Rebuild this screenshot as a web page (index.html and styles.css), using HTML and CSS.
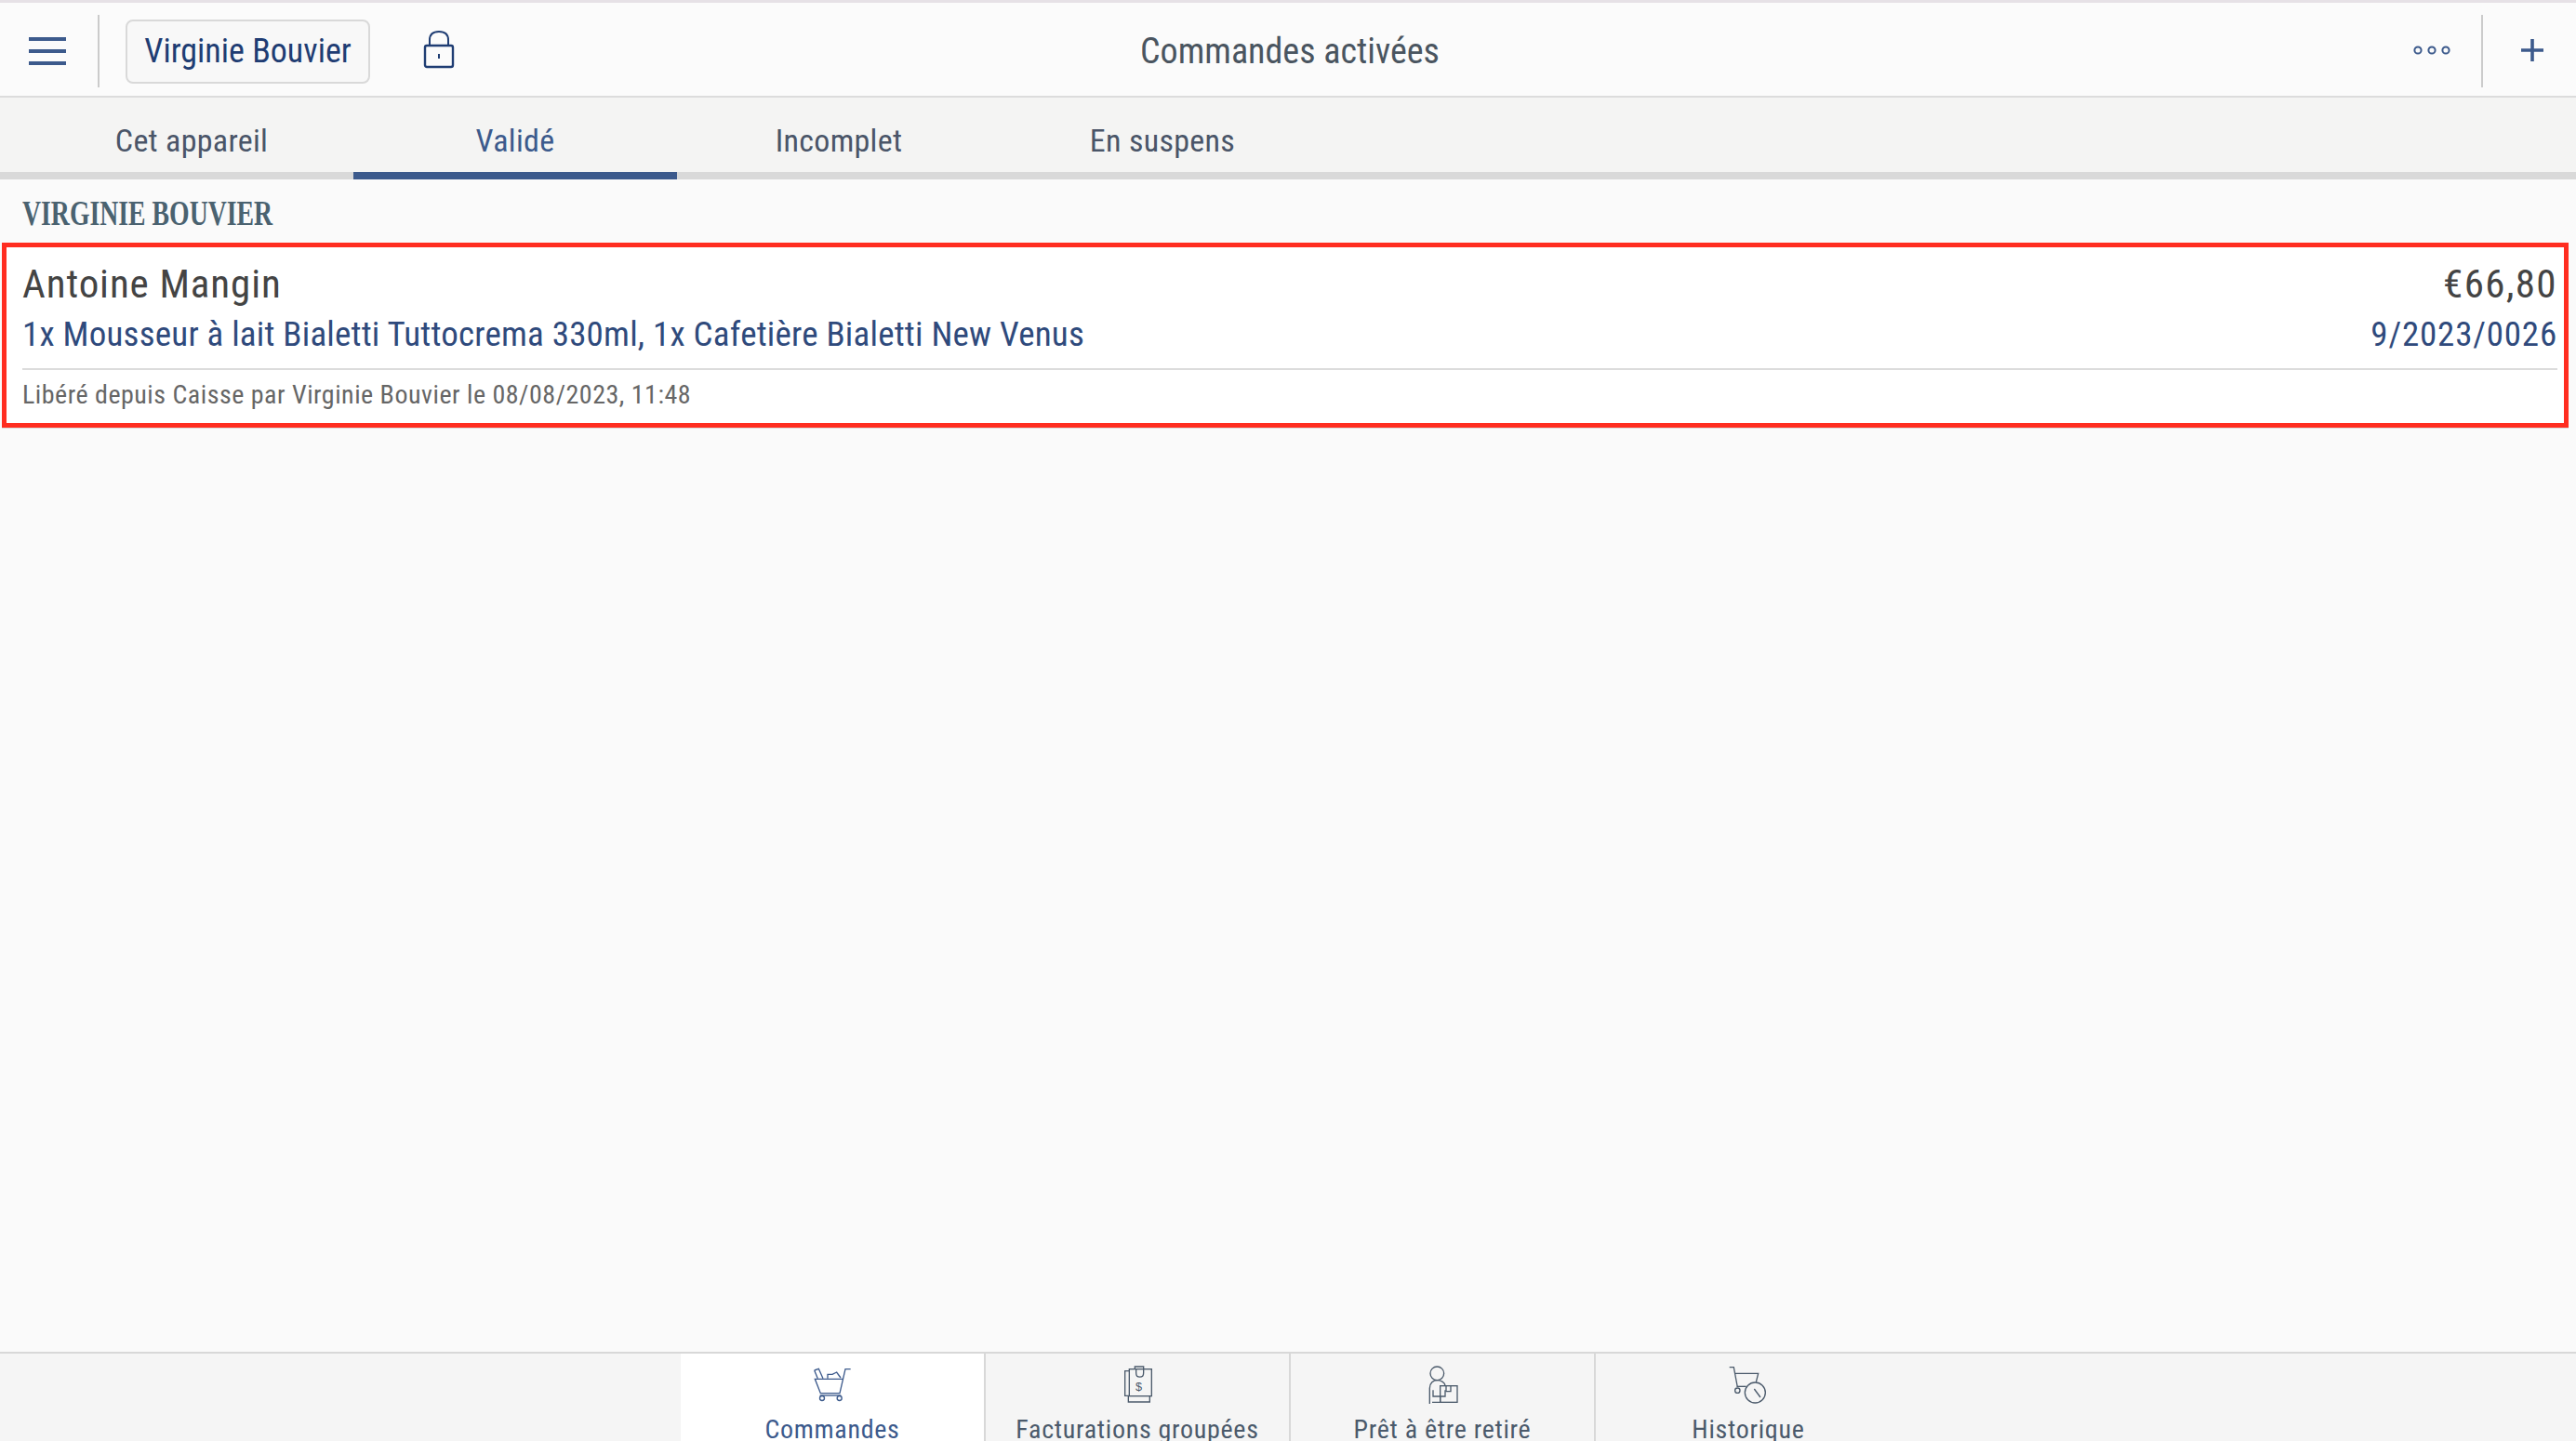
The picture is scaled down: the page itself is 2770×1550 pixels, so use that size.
FILE: index.html
```html
<!DOCTYPE html>
<html lang="fr">
<head>
<meta charset="utf-8">
<title>Commandes activées</title>
<link rel="stylesheet" href="styles.css">
</head>
<body>
<div class="app">
  <header class="topbar">
    <div class="topbar-left">
      <button class="icon-btn menu-btn" aria-label="Menu">
        <svg width="42" height="30" viewBox="0 0 42 30"><path d="M1 2H41M1 15H41M1 28H41" class="stroke-blue" stroke-width="4"/></svg>
      </button>
      <span class="vsep"></span>
      <button class="user-chip">Virginie Bouvier</button>
      <svg class="lock" width="36" height="42" viewBox="0 0 36 42"><path d="M8 17V11C8 5 12 2 18 2S28 5 28 11V17" class="stroke-navy" stroke-width="2"/><rect x="3" y="17" width="30" height="23" rx="2" class="stroke-navy" stroke-width="2.4"/><path d="M18 26V31" class="stroke-navy" stroke-width="2"/></svg>
    </div>
    <h1 class="title">Commandes activées</h1>
    <div class="topbar-right">
      <svg class="dots" width="44" height="12" viewBox="0 0 44 12"><circle cx="7" cy="6" r="3.6" class="stroke-blue" stroke-width="2"/><circle cx="22" cy="6" r="3.6" class="stroke-blue" stroke-width="2"/><circle cx="37" cy="6" r="3.6" class="stroke-blue" stroke-width="2"/></svg>
      <span class="vsep"></span>
      <svg class="plus" width="24" height="24" viewBox="0 0 24 24"><path d="M12 0V24M0 12H24" class="stroke-blue" stroke-width="3.6"/></svg>
    </div>
  </header>

  <nav class="tabs">
    <a class="tab">Cet appareil</a>
    <a class="tab tab-active">Validé</a>
    <a class="tab">Incomplet</a>
    <a class="tab">En suspens</a>
  </nav>

  <main class="content">
    <h2 class="group"><span class="group-label">VIRGINIE BOUVIER</span></h2>
    <article class="order">
      <div class="order-row order-top">
        <span class="customer">Antoine Mangin</span>
        <span class="amount">€66,80</span>
      </div>
      <div class="order-row order-mid">
        <span class="items">1x Mousseur à lait Bialetti Tuttocrema 330ml, 1x Cafetière Bialetti New Venus</span>
        <span class="ref">9/2023/0026</span>
      </div>
      <div class="order-note">Libéré depuis Caisse par Virginie Bouvier le 08/08/2023, 11:48</div>
    </article>
  </main>

  <footer class="bottom">
    <a class="bottom-tab bottom-active">
      <svg width="42" height="44" viewBox="0 -6 126 132"><g class="stroke-blue" stroke-width="4"><path d="M122 8H105L87 86H25L7 40H97"/><path d="M23 93H91"/><circle cx="30" cy="102" r="7.5"/><circle cx="86" cy="102" r="7.5"/><path d="M5 12L19 7L33 38M5 12L16 38"/><path d="M48 38V25H63L77 18L90 36"/></g></svg>
      <span>Commandes</span>
    </a>
    <a class="bottom-tab">
      <svg width="42" height="44" viewBox="-17 0 126 132"><g class="stroke-slate" stroke-width="4"><path d="M20 20H6V100H20"/><rect x="20" y="14" width="72" height="87"/><path d="M17 102V120H86V102"/><path d="M38 14V6H66V26C66 44 42 44 42 26V14"/></g><text x="40" y="84" class="dollar">$</text></svg>
      <span>Facturations groupées</span>
    </a>
    <a class="bottom-tab">
      <svg width="42" height="44" viewBox="0 0 126 132"><g class="stroke-slate" stroke-width="4"><circle cx="46" cy="28" r="22"/><path d="M22 126V76C22 58 34 50 46 50C58 50 70 56 72 66"/><rect x="56" y="68" width="55" height="53"/><path d="M75 68V86H90V68"/><path d="M33 82V102H72V82M56 102V121H30"/></g></svg>
      <span>Prêt à être retiré</span>
    </a>
    <a class="bottom-tab">
      <svg width="42" height="44" viewBox="0 0 126 132"><g class="stroke-slate" stroke-width="4"><path d="M2 8H16L28 72"/><path d="M18 28H95L88 56"/><path d="M26 70H56"/><circle cx="28" cy="83" r="8"/><circle cx="85" cy="90" r="33"/><path d="M82 78L102 105"/></g></svg>
      <span>Historique</span>
    </a>
  </footer>
</div>
</body>
</html>
```
FILE: styles.css
```css
* { box-sizing: border-box; }
html, body { margin: 0; padding: 0; }
body {
  width: 2770px;
  height: 1550px;
  overflow: hidden;
  background: #fafafa;
  font-family: Roboto, "Liberation Sans", sans-serif;
  font-stretch: 75%;
}
.app { height: 1550px; display: flex; flex-direction: column; overflow: hidden; }

svg { display: block; fill: none; }
.stroke-blue { stroke: #3c5a8c; fill: none; }
.stroke-navy { stroke: #1f3d73; fill: none; }
.stroke-slate { stroke: #4b5a6b; fill: none; }
.dollar { font-size: 38px; font-family: "Liberation Sans", sans-serif; fill: #4b5a6b; stroke: none; }

.topbar {
  height: 105px;
  flex: none;
  background: #fbfbfb;
  border-top: 3px solid #e6e1e6;
  border-bottom: 2px solid #dcdcdc;
  padding-top: 4px;
  display: grid;
  grid-template-columns: 1fr auto 1fr;
  align-items: center;
}
.topbar-left, .topbar-right { display: flex; align-items: center; height: 78px; }
.topbar-right { justify-content: flex-end; padding-right: 35px; }
.icon-btn { background: none; border: 0; padding: 0; }
.menu-btn { margin-left: 30px; margin-right: 33px; }
.vsep { width: 2px; height: 78px; background: #cbcbcb; flex: none; }
.user-chip {
  margin-left: 28px;
  height: 69px;
  width: 263px;
  padding: 0 0 1px;
  background: #f8f8f8;
  border: 2px solid #d9d9d9;
  border-radius: 8px;
  font: inherit;
  font-size: 36px;
  font-stretch: 75%;
  white-space: nowrap;
  color: #1f3d73;
}
.lock { margin-left: 56px; margin-bottom: 4px; }
.title {
  margin: 0 0 1px;
  padding-left: 4px;
  font-weight: 400;
  font-size: 38px;
  color: #4a5560;
}
.dots { margin-right: 31px; margin-bottom: 2px; }
.plus { margin-left: 41px; margin-bottom: 2px; }

.tabs {
  height: 88px;
  flex: none;
  background: #f4f4f3;
  border-bottom: 8px solid #d9d9d9;
  display: flex;
  padding-left: 32px;
}
.tab {
  width: 348px;
  height: 88px;
  line-height: 93px;
  text-align: center;
  font-size: 34px;
  letter-spacing: 0.3px;
  color: #4a5568;
}
.tab-active { color: #3c5a8c; border-bottom: 8px solid #3c5a8c; }

.content { flex: 1; min-height: 0; }
.group {
  margin: 0;
  height: 68px;
  padding: 19px 0 0 24px;
  font-family: "Liberation Serif", serif;
  font-size: 37px;
  line-height: 36px;
  font-weight: 700;
  font-stretch: 100%;
  color: #4a6270;
}
.group-label { display: inline-block; transform: scaleX(0.75); transform-origin: left center; }
.order {
  margin-left: 2px;
  width: 2760px;
  height: 199px;
  background: #fff;
  border: 5px solid #ff2d20;
  padding: 0 7px 0 17px;
  box-shadow: 0 1px 0 #dcdcdc;
}
.order-row { display: flex; justify-content: space-between; align-items: center; }
.order-top { height: 48px; margin-top: 15px; color: #444; font-size: 43px; }
.customer { letter-spacing: 0.9px; }
.amount { letter-spacing: 1.4px; }
.order-mid { height: 61px; color: #2f4a7c; font-size: 37px; }
.items { letter-spacing: 0.2px; }
.ref { letter-spacing: 0.8px; }
.order-note {
  margin-top: 6px;
  border-top: 2px solid #dcdcdc;
  padding-top: 8px;
  font-size: 28px;
  letter-spacing: 0.5px;
  line-height: 38px;
  color: #666;
}

.bottom {
  height: 96px;
  flex: none;
  background: #f5f5f5;
  border-top: 2px solid #d8d8d8;
  display: flex;
  padding-left: 732px;
  overflow: hidden;
}
.bottom-tab {
  width: 328px;
  height: 130px;
  flex: none;
  border-right: 2px solid #d8d8d8;
  display: flex;
  flex-direction: column;
  align-items: center;
  padding-top: 12px;
  font-size: 28px;
  letter-spacing: 0.7px;
  color: #4b5a6b;
}
.bottom-tab:last-child { border-right: 0; }
.bottom-tab span { display: block; margin-top: 6px; line-height: 40px; }
.bottom-active { background: #fff; color: #3c5a8c; }
```
